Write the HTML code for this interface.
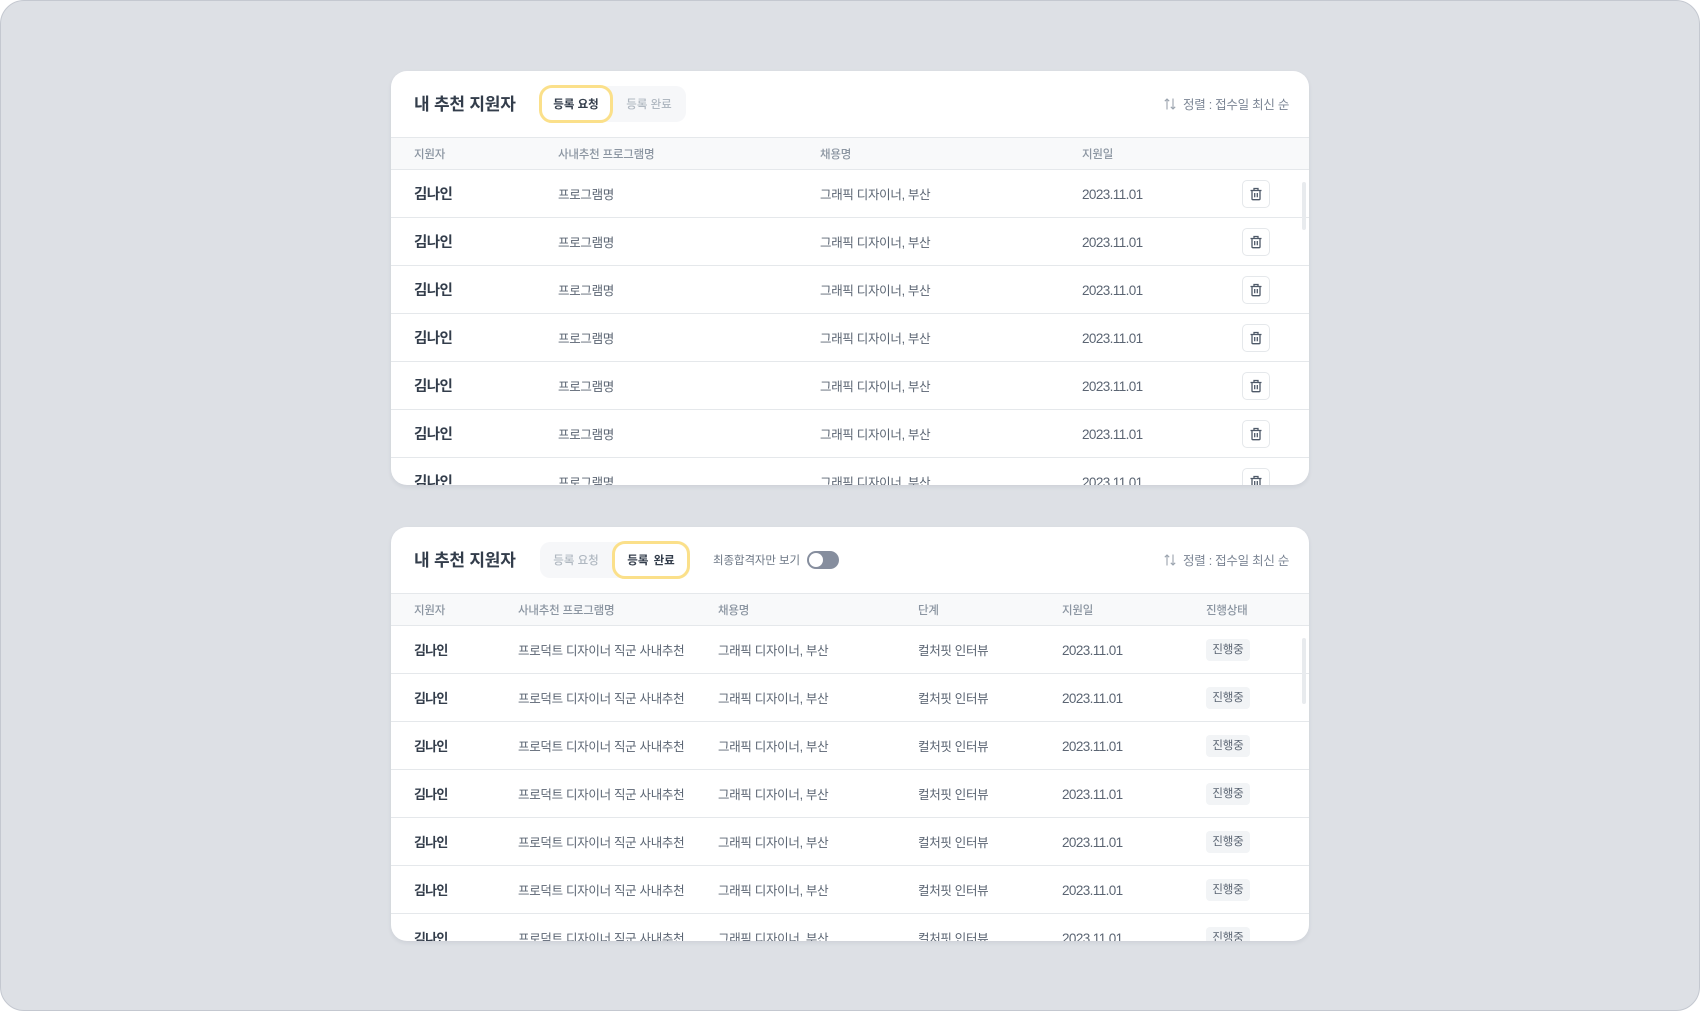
<!DOCTYPE html>
<html lang="ko"><head><meta charset="utf-8"><style>
*{box-sizing:border-box;margin:0;padding:0}
html,body{width:1700px;height:1011px;overflow:hidden;background:#fff}
body{font-family:"Liberation Sans","Noto Sans CJK KR",sans-serif;position:relative;-webkit-font-smoothing:antialiased}
.frame{position:absolute;inset:0;background:#dde0e5;border:1px solid #c4c8d0;border-radius:24px}
.card{position:absolute;left:391px;width:918px;height:414px;background:#fff;border-radius:16px;overflow:hidden;box-shadow:0 2px 4px rgba(30,40,60,.08)}
.a{position:absolute;white-space:nowrap}
.title{left:23px;top:21px;font-size:17px;letter-spacing:-.2px;line-height:26px;font-weight:700;color:#333d4b}
.group{position:absolute;left:149px;top:15px;width:146px;height:36px;background:#f6f7f9;border-radius:10px}
.tab{position:absolute;text-align:center;font-size:11.5px;line-height:38px;color:#b0b8c1;font-weight:500;top:0}
.on{background:#fff;border:3px solid #fbe08a;border-radius:13px;color:#333d4b;font-weight:700;z-index:2}
.sort{left:792px;top:24px;font-size:12.5px;letter-spacing:-.25px;line-height:20px;color:#7b8594}
.hd{position:absolute;left:0;top:66px;width:100%;height:33px;background:#f8f9fa;border-top:1px solid #e5e8eb;border-bottom:1px solid #e5e8eb}
.hd span{position:absolute;top:8px;font-size:11.5px;letter-spacing:-.2px;line-height:18px;color:#8b95a1;font-weight:500;white-space:nowrap}
.row{position:absolute;left:0;width:100%;height:48px;border-bottom:1px solid #e5e8eb}
.row span{position:absolute;top:15px;font-size:12.5px;letter-spacing:-.3px;line-height:21px;color:#5b6573;white-space:nowrap}
.row .d{font-size:13.5px;letter-spacing:-.6px;top:14px}
.row .n{font-weight:700;color:#333d4b;font-size:14.5px;letter-spacing:-.6px;top:15px}
.c2 .row .n{font-size:13px;letter-spacing:-.8px;top:14px}
.del{position:absolute;left:851px;top:10px;width:28px;height:28px;border:1px solid #e5e8eb;border-radius:5px;background:#fff}
.del svg{position:absolute;left:6px;top:6px}
.row .tag{left:815px;top:13px;width:44px;height:22px;line-height:23px;background:#f2f4f6;border-radius:4px;text-align:center;font-size:11.5px;letter-spacing:-.2px}
.bar{position:absolute;left:911px;width:4px;background:#e8ebee;border-radius:2px;z-index:3}
.lbl{left:322px;top:25px;font-size:11.5px;letter-spacing:-.1px;line-height:19px;color:#6b7684}
.tog{position:absolute;left:416px;top:24px;width:32px;height:18px;border-radius:9px;background:#868e9e}
.tog i{position:absolute;left:2px;top:2px;width:14px;height:14px;border-radius:50%;background:#fff}
</style></head><body>
<div class="frame"></div>

<div class="card" style="top:71px">
<div class="a title">내 추천 지원자</div>
<div class="group"><div class="tab on" style="left:-1px;top:-1px;width:74px;height:38px;line-height:34px">등록 요청</div><div class="tab" style="left:72px;width:74px">등록 완료</div></div>
<svg class="a" style="left:772px;top:26px" width="14" height="14" viewBox="0 0 14 14" fill="none" stroke="#9aa3ae" stroke-width="1.1"><path d="M4 12.500V2M1.800 4.200L4 2l2.200 2.200M10 1.500V12M7.800 9.800L10 12l2.200-2.200"/></svg>
<div class="a sort">정렬 : 접수일 최신 순</div>
<div class="hd"><span style="left:23px">지원자</span><span style="left:167px">사내추천 프로그램명</span><span style="left:429px">채용명</span><span style="left:691px">지원일</span></div>
<div class="bar" style="top:111px;height:48px"></div>
<div class="row" style="top:99px"><span class="n" style="left:23px">김나인</span><span style="left:167px">프로그램명</span><span style="left:429px">그래픽 디자이너, 부산</span><span class="d" style="left:691px">2023.11.01</span><div class="del"><svg width="14" height="14" viewBox="0 0 14 14" fill="none" stroke="#4e5968" stroke-width="1.300"><path d="M1.500 3.500h11M5 3.300V1.500h4v1.800M3 3.500v8.200c0 .6.400 1 1 1h6c.6 0 1-.4 1-1V3.500M5.700 6v4.200M8.300 6v4.200"/></svg></div></div>
<div class="row" style="top:147px"><span class="n" style="left:23px">김나인</span><span style="left:167px">프로그램명</span><span style="left:429px">그래픽 디자이너, 부산</span><span class="d" style="left:691px">2023.11.01</span><div class="del"><svg width="14" height="14" viewBox="0 0 14 14" fill="none" stroke="#4e5968" stroke-width="1.300"><path d="M1.500 3.500h11M5 3.300V1.500h4v1.800M3 3.500v8.200c0 .6.400 1 1 1h6c.6 0 1-.4 1-1V3.500M5.700 6v4.200M8.300 6v4.200"/></svg></div></div>
<div class="row" style="top:195px"><span class="n" style="left:23px">김나인</span><span style="left:167px">프로그램명</span><span style="left:429px">그래픽 디자이너, 부산</span><span class="d" style="left:691px">2023.11.01</span><div class="del"><svg width="14" height="14" viewBox="0 0 14 14" fill="none" stroke="#4e5968" stroke-width="1.300"><path d="M1.500 3.500h11M5 3.300V1.500h4v1.800M3 3.500v8.200c0 .6.400 1 1 1h6c.6 0 1-.4 1-1V3.500M5.700 6v4.200M8.300 6v4.200"/></svg></div></div>
<div class="row" style="top:243px"><span class="n" style="left:23px">김나인</span><span style="left:167px">프로그램명</span><span style="left:429px">그래픽 디자이너, 부산</span><span class="d" style="left:691px">2023.11.01</span><div class="del"><svg width="14" height="14" viewBox="0 0 14 14" fill="none" stroke="#4e5968" stroke-width="1.300"><path d="M1.500 3.500h11M5 3.300V1.500h4v1.800M3 3.500v8.200c0 .6.400 1 1 1h6c.6 0 1-.4 1-1V3.500M5.700 6v4.200M8.300 6v4.200"/></svg></div></div>
<div class="row" style="top:291px"><span class="n" style="left:23px">김나인</span><span style="left:167px">프로그램명</span><span style="left:429px">그래픽 디자이너, 부산</span><span class="d" style="left:691px">2023.11.01</span><div class="del"><svg width="14" height="14" viewBox="0 0 14 14" fill="none" stroke="#4e5968" stroke-width="1.300"><path d="M1.500 3.500h11M5 3.300V1.500h4v1.800M3 3.500v8.200c0 .6.400 1 1 1h6c.6 0 1-.4 1-1V3.500M5.700 6v4.200M8.300 6v4.200"/></svg></div></div>
<div class="row" style="top:339px"><span class="n" style="left:23px">김나인</span><span style="left:167px">프로그램명</span><span style="left:429px">그래픽 디자이너, 부산</span><span class="d" style="left:691px">2023.11.01</span><div class="del"><svg width="14" height="14" viewBox="0 0 14 14" fill="none" stroke="#4e5968" stroke-width="1.300"><path d="M1.500 3.500h11M5 3.300V1.500h4v1.800M3 3.500v8.200c0 .6.400 1 1 1h6c.6 0 1-.4 1-1V3.500M5.700 6v4.200M8.300 6v4.200"/></svg></div></div>
<div class="row" style="top:387px"><span class="n" style="left:23px">김나인</span><span style="left:167px">프로그램명</span><span style="left:429px">그래픽 디자이너, 부산</span><span class="d" style="left:691px">2023.11.01</span><div class="del"><svg width="14" height="14" viewBox="0 0 14 14" fill="none" stroke="#4e5968" stroke-width="1.300"><path d="M1.500 3.500h11M5 3.300V1.500h4v1.800M3 3.500v8.200c0 .6.400 1 1 1h6c.6 0 1-.4 1-1V3.500M5.700 6v4.200M8.300 6v4.200"/></svg></div></div>
</div>

<div class="card c2" style="top:527px">
<div class="a title">내 추천 지원자</div>
<div class="group" style="width:150px"><div class="tab" style="left:0;width:72px">등록 요청</div><div class="tab on" style="left:72px;top:-1px;width:78px;height:38px;line-height:34px;word-spacing:2px">등록 완료</div></div>
<div class="a lbl">최종합격자만 보기</div>
<div class="tog"><i></i></div>
<svg class="a" style="left:772px;top:26px" width="14" height="14" viewBox="0 0 14 14" fill="none" stroke="#9aa3ae" stroke-width="1.1"><path d="M4 12.500V2M1.800 4.200L4 2l2.200 2.200M10 1.500V12M7.800 9.800L10 12l2.200-2.200"/></svg>
<div class="a sort">정렬 : 접수일 최신 순</div>
<div class="hd"><span style="left:23px">지원자</span><span style="left:127px">사내추천 프로그램명</span><span style="left:327px">채용명</span><span style="left:527px">단계</span><span style="left:671px">지원일</span><span style="left:815px">진행상태</span></div>
<div class="bar" style="top:111px;height:66px"></div>
<div class="row" style="top:99px"><span class="n" style="left:23px">김나인</span><span style="left:127px">프로덕트 디자이너 직군 사내추천</span><span style="left:327px">그래픽 디자이너, 부산</span><span style="left:527px">컬처핏 인터뷰</span><span class="d" style="left:671px">2023.11.01</span><span class="tag">진행중</span></div>
<div class="row" style="top:147px"><span class="n" style="left:23px">김나인</span><span style="left:127px">프로덕트 디자이너 직군 사내추천</span><span style="left:327px">그래픽 디자이너, 부산</span><span style="left:527px">컬처핏 인터뷰</span><span class="d" style="left:671px">2023.11.01</span><span class="tag">진행중</span></div>
<div class="row" style="top:195px"><span class="n" style="left:23px">김나인</span><span style="left:127px">프로덕트 디자이너 직군 사내추천</span><span style="left:327px">그래픽 디자이너, 부산</span><span style="left:527px">컬처핏 인터뷰</span><span class="d" style="left:671px">2023.11.01</span><span class="tag">진행중</span></div>
<div class="row" style="top:243px"><span class="n" style="left:23px">김나인</span><span style="left:127px">프로덕트 디자이너 직군 사내추천</span><span style="left:327px">그래픽 디자이너, 부산</span><span style="left:527px">컬처핏 인터뷰</span><span class="d" style="left:671px">2023.11.01</span><span class="tag">진행중</span></div>
<div class="row" style="top:291px"><span class="n" style="left:23px">김나인</span><span style="left:127px">프로덕트 디자이너 직군 사내추천</span><span style="left:327px">그래픽 디자이너, 부산</span><span style="left:527px">컬처핏 인터뷰</span><span class="d" style="left:671px">2023.11.01</span><span class="tag">진행중</span></div>
<div class="row" style="top:339px"><span class="n" style="left:23px">김나인</span><span style="left:127px">프로덕트 디자이너 직군 사내추천</span><span style="left:327px">그래픽 디자이너, 부산</span><span style="left:527px">컬처핏 인터뷰</span><span class="d" style="left:671px">2023.11.01</span><span class="tag">진행중</span></div>
<div class="row" style="top:387px"><span class="n" style="left:23px">김나인</span><span style="left:127px">프로덕트 디자이너 직군 사내추천</span><span style="left:327px">그래픽 디자이너, 부산</span><span style="left:527px">컬처핏 인터뷰</span><span class="d" style="left:671px">2023.11.01</span><span class="tag">진행중</span></div>
</div>
</body></html>
